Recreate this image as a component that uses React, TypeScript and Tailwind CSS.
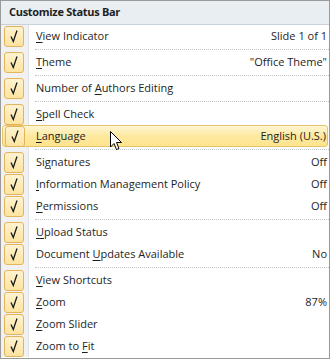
import React from "react";

type Item = { label: React.ReactNode; value?: string; sepAfter?: boolean; hot?: boolean };

const U = ({ c }: { c: string }) => <span className="underline underline-offset-[2px] decoration-[1px]">{c}</span>;

const items: Item[] = [
  { label: <><U c="V" />iew Indicator</>, value: "Slide 1 of 1", sepAfter: true },
  { label: <><U c="T" />heme</>, value: "\"Office Theme\"", sepAfter: true },
  { label: <>Number of <U c="A" />uthors Editing</>, sepAfter: true },
  { label: <><U c="S" />pell Check</> },
  { label: <><U c="L" />anguage</>, value: "English (U.S.)", hot: true, sepAfter: true },
  { label: <>Si<U c="g" />natures</>, value: "Off" },
  { label: <><U c="I" />nformation Management Policy</>, value: "Off" },
  { label: <><U c="P" />ermissions</>, value: "Off", sepAfter: true },
  { label: <><U c="U" />pload Status</> },
  { label: <>Document <U c="U" />pdates Available</>, value: "No", sepAfter: true },
  { label: <><U c="V" />iew Shortcuts</> },
  { label: <><U c="Z" />oom</>, value: "87%" },
  { label: <><U c="Z" />oom Slider</> },
  { label: <>Zoom to <U c="F" />it</> },
];

function Check() {
  return (
    <div className="w-[20px] h-[21px] ml-[3px] rounded-[3px] border border-[#e3b45c] bg-gradient-to-b from-[#fff3cf] to-[#fde3a0] flex items-center justify-center">
      <svg width="12" height="14" viewBox="0 0 12 14">
        <path d="M3 7.5 L5.3 12.5 L9 1.5" fill="none" stroke="#1a1a1a" strokeWidth="1.3" strokeLinejoin="miter" />
      </svg>
    </div>
  );
}

function Cursor() {
  return (
    <svg className="absolute left-[107px] top-[5px]" width="13" height="20" viewBox="0 0 13 20">
      <path d="M0.5 0.5 L0.5 16 L4 12.5 L6.5 18.5 L9 17.5 L6.5 11.5 L11.5 11.5 Z" fill="#fff" stroke="#000" strokeWidth="1" strokeLinejoin="miter" />
    </svg>
  );
}

export default function App() {
  return (
    <div className="w-[330px] h-[359px] border border-[#9a9a9a] bg-white flex flex-col text-[11px] text-[#1e1e1e] font-['Open_Sans',sans-serif] overflow-hidden">
      <div className="h-[24px] shrink-0 bg-[#e9eef3] border-b border-[#c9d1da] flex items-center pl-[8px] font-bold tracking-[-0.3px] text-[#1e1e1e]">
        Customize Status Bar
      </div>
      <div className="flex flex-col">
        {items.map((it, i) => (
          <React.Fragment key={i}>
            {it.hot ? (
              <div className="relative h-[22px] mx-[1px] flex items-center rounded-[3px] border border-[#e6c56a] bg-gradient-to-b from-[#fff6d3] via-[#fde99f] to-[#fde48e]">
                <div className="w-[26px] shrink-0 flex items-center">
                  <div className="-ml-[1px]"><Check /></div>
                </div>
                <div className="flex-1 pl-[7px]">{it.label}</div>
                {it.value && <div className="pr-[1px]">{it.value}</div>}
                <Cursor />
              </div>
            ) : (
              <div className="h-[22px] flex items-center">
                <div className="w-[28px] self-stretch shrink-0 bg-[#f1f1f1] border-r border-[#e1e2e3] flex items-center">
                  <Check />
                </div>
                <div className="flex-1 pl-[6px] border-l border-white">{it.label}</div>
                {it.value && <div className="pr-[2px]">{it.value}</div>}
              </div>
            )}
            {it.sepAfter && (
              <div className="h-[4px] flex">
                <div className="w-[28px] shrink-0 bg-[#f1f1f1] border-r border-[#e1e2e3]" />
                <div className="flex-1 flex items-center pl-[5px] border-l border-white">
                  <div className="w-full border-t border-dotted border-[#c4c4c4]" />
                </div>
              </div>
            )}
          </React.Fragment>
        ))}
      </div>
    </div>
  );
}
